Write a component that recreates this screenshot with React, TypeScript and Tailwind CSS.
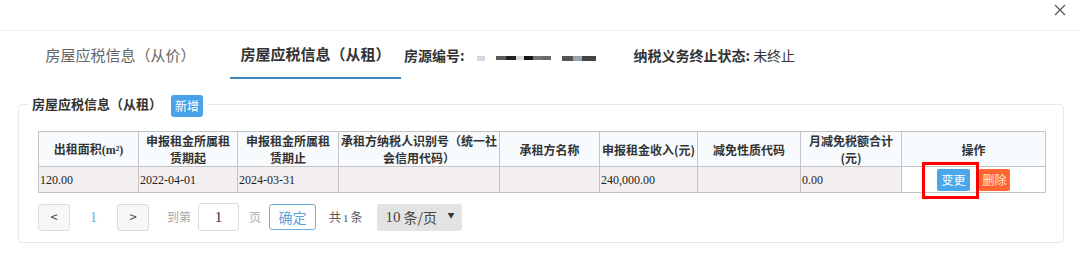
import type { ReactNode } from 'react';

const cjk = "font-['Microsoft_YaHei','Noto_Sans_CJK_SC',sans-serif]";
const serif = "font-['Liberation_Serif',serif]";

const columns: { width: number; title: ReactNode; tight?: boolean }[] = [
	{
		width: 100,
		title: (
			<>
				出租面积<span className={serif}>(m²)</span>
			</>
		),
	},
	{ width: 99, title: '申报租金所属租赁期起' },
	{ width: 101, title: '申报租金所属租赁期止' },
	{ width: 161, title: '承租方纳税人识别号（统一社会信用代码）', tight: true },
	{ width: 100, title: '承租方名称' },
	{ width: 98, title: '申报租金收入(元)', tight: true },
	{ width: 103, title: '减免性质代码' },
	{ width: 101, title: '月减免税额合计(元)' },
	{ width: 144, title: '操作' },
];

const row = ['120.00', '2022-04-01', '2024-03-31', '', '', '240,000.00', '', '0.00'];

function CloseIcon() {
	return (
		<svg width="12" height="12" viewBox="0 0 12 12" fill="none">
			<path d="M1 1L11 11M11 1L1 11" stroke="#555" strokeWidth="1.2" />
		</svg>
	);
}

function Redacted() {
	return (
		<div className="ml-[12px] flex items-center gap-[11px] pt-[6px]">
			<div className="h-[5px] w-[8px] bg-[#d3d8e0]" />
			<div className="flex h-[4px]">
				<div className="w-[10px] bg-[#5a5a5a]" />
				<div className="w-[10px] bg-[#1e2228]" />
				<div className="w-[8px] bg-[#dcd6d2]" />
				<div className="w-[9px] bg-[#12141a]" />
				<div className="w-[9px] bg-[#7a706c]" />
				<div className="w-[9px] bg-[#6a6a6a]" />
			</div>
			<div className="flex h-[5px] rounded-br-[3px]">
				<div className="w-[11px] bg-[#555]" />
				<div className="w-[9px] bg-[#9aa4ae]" />
				<div className="w-[14px] bg-[#444]" />
			</div>
		</div>
	);
}

export default function App() {
	return (
		<div className={`h-[265px] w-[1080px] overflow-hidden bg-white text-[#333] ${cjk}`}>
			<div className="flex h-[31px] justify-end border-b border-[#efefef] pr-[14px] pt-[4px]">
				<CloseIcon />
			</div>

			<div className="flex h-[48px] items-stretch">
				<div className="ml-[33px] flex w-[171px] items-center justify-center pl-[4px] text-[15px] text-[#666]">
					房屋应税信息（从价）
				</div>
				<div className="ml-[26px] flex w-[171px] items-center justify-center border-b-2 border-[#3d88bb] text-[15px] font-bold text-[#333]">
					房屋应税信息（从租）
				</div>
				<div className="ml-[3px] flex items-center text-[14px] font-bold">
					房源编号:
				</div>
				<Redacted />
				<div className="ml-[38px] flex items-center text-[14px]">
					<span className="font-bold">纳税义务终止状态:</span>
					<span className="ml-[3px]">未终止</span>
				</div>
			</div>

			<fieldset className="ml-[18px] mr-[17px] mt-[13px] rounded-[4px] border border-[#e8e8e8] pb-[11px] pl-[19px] pr-[17px] pt-[15px]">
				<legend className="-ml-[10px] flex h-[24px] items-center px-[4px]">
					<span className="text-[13px] font-bold text-[#333]">房屋应税信息（从租）</span>
					<button
						type="button"
						className="ml-[9px] mt-[4px] flex h-[22px] w-[32px] items-center justify-center rounded-[3px] bg-[#4aa3e8] text-[12px] text-white"
					>
						新增
					</button>
				</legend>

				<table className="w-[1007px] table-fixed border-collapse">
					<colgroup>
						{columns.map((col, i) => (
							<col key={i} style={{ width: col.width }} />
						))}
					</colgroup>
					<thead>
						<tr className="h-[35px] bg-[#f8fbfe]">
							{columns.map((col, i) => (
								<th
									key={i}
									className={`border border-[#c4c4c4] py-0 text-center align-middle text-[12px] font-bold leading-[17px] text-[#333] ${
										col.tight ? 'px-0' : 'px-[4px]'
									}`}
								>
									{col.title}
								</th>
							))}
						</tr>
					</thead>
					<tbody>
						<tr className="h-[26px] bg-[#f3eff1]">
							{row.map((v, i) => (
								<td
									key={i}
									className={`border border-[#c4c4c4] px-[1px] py-0 text-left align-middle text-[12px] text-[#222] ${serif}`}
								>
									{v}
								</td>
							))}
							<td className="border border-[#c4c4c4] bg-white p-0 align-middle">
								<div className="flex items-center justify-center gap-[9px]">
									<div className="relative">
										<button
											type="button"
											className="flex h-[22px] w-[33px] items-center justify-center rounded-[2px] bg-[#4aa8ea] text-[12px] text-white"
										>
											变更
										</button>
										<div className="pointer-events-none absolute -bottom-[8px] -left-[15px] -right-[9px] -top-[7px] border-[3px] border-[#ff0000]" />
									</div>
									<button
										type="button"
										className="flex h-[22px] w-[31px] items-center justify-center rounded-[2px] bg-[#ff6633] text-[12px] text-[#ffe6dc]"
									>
										删除
									</button>
								</div>
							</td>
						</tr>
					</tbody>
				</table>

				<div className="mt-[10px] flex h-[28px] items-center text-[12px]">
					<button
						type="button"
						className="flex h-[27px] w-[32px] items-center justify-center rounded-[3px] border border-[#dcdcdc] bg-[#f7f7f7] text-[13px] text-[#444]"
					>
						&lt;
					</button>
					<span className={`ml-[20px] w-[7px] text-[14px] text-[#6aaee0] ${serif}`}>1</span>
					<button
						type="button"
						className="ml-[20px] flex h-[27px] w-[32px] items-center justify-center rounded-[3px] border border-[#dcdcdc] bg-[#f7f7f7] text-[13px] text-[#444]"
					>
						&gt;
					</button>
					<span className="ml-[18px] text-[#aaa]">到第</span>
					<div className={`ml-[7px] flex h-[28px] w-[41px] items-center justify-center rounded-[3px] border border-[#dcdcdc] text-[15px] text-[#333] ${serif}`}>
						1
					</div>
					<span className="ml-[10px] text-[#aaa]">页</span>
					<button
						type="button"
						className="ml-[8px] flex h-[26px] w-[47px] items-center justify-center rounded-[3px] border border-[#6aaee0] text-[14px] text-[#5aa3dc]"
					>
						确定
					</button>
					<span className="ml-[13px] text-[#555]">
						共<span className={`mx-[2px] text-[11px] ${serif}`}>1</span>条
					</span>
					<div className="ml-[14px] flex h-[27px] w-[85px] items-center rounded-[3px] bg-[#e3e3e3] pl-[9px] pr-[6px] text-[#444]">
						<span className={`text-[15px] ${serif}`}>10</span>
						<span className="ml-[3px] text-[14px]">条/页</span>
						<span className="-mt-[3px] ml-auto pr-[1px] text-[7px] text-[#333]">▼</span>
					</div>
				</div>
			</fieldset>
		</div>
	);
}
